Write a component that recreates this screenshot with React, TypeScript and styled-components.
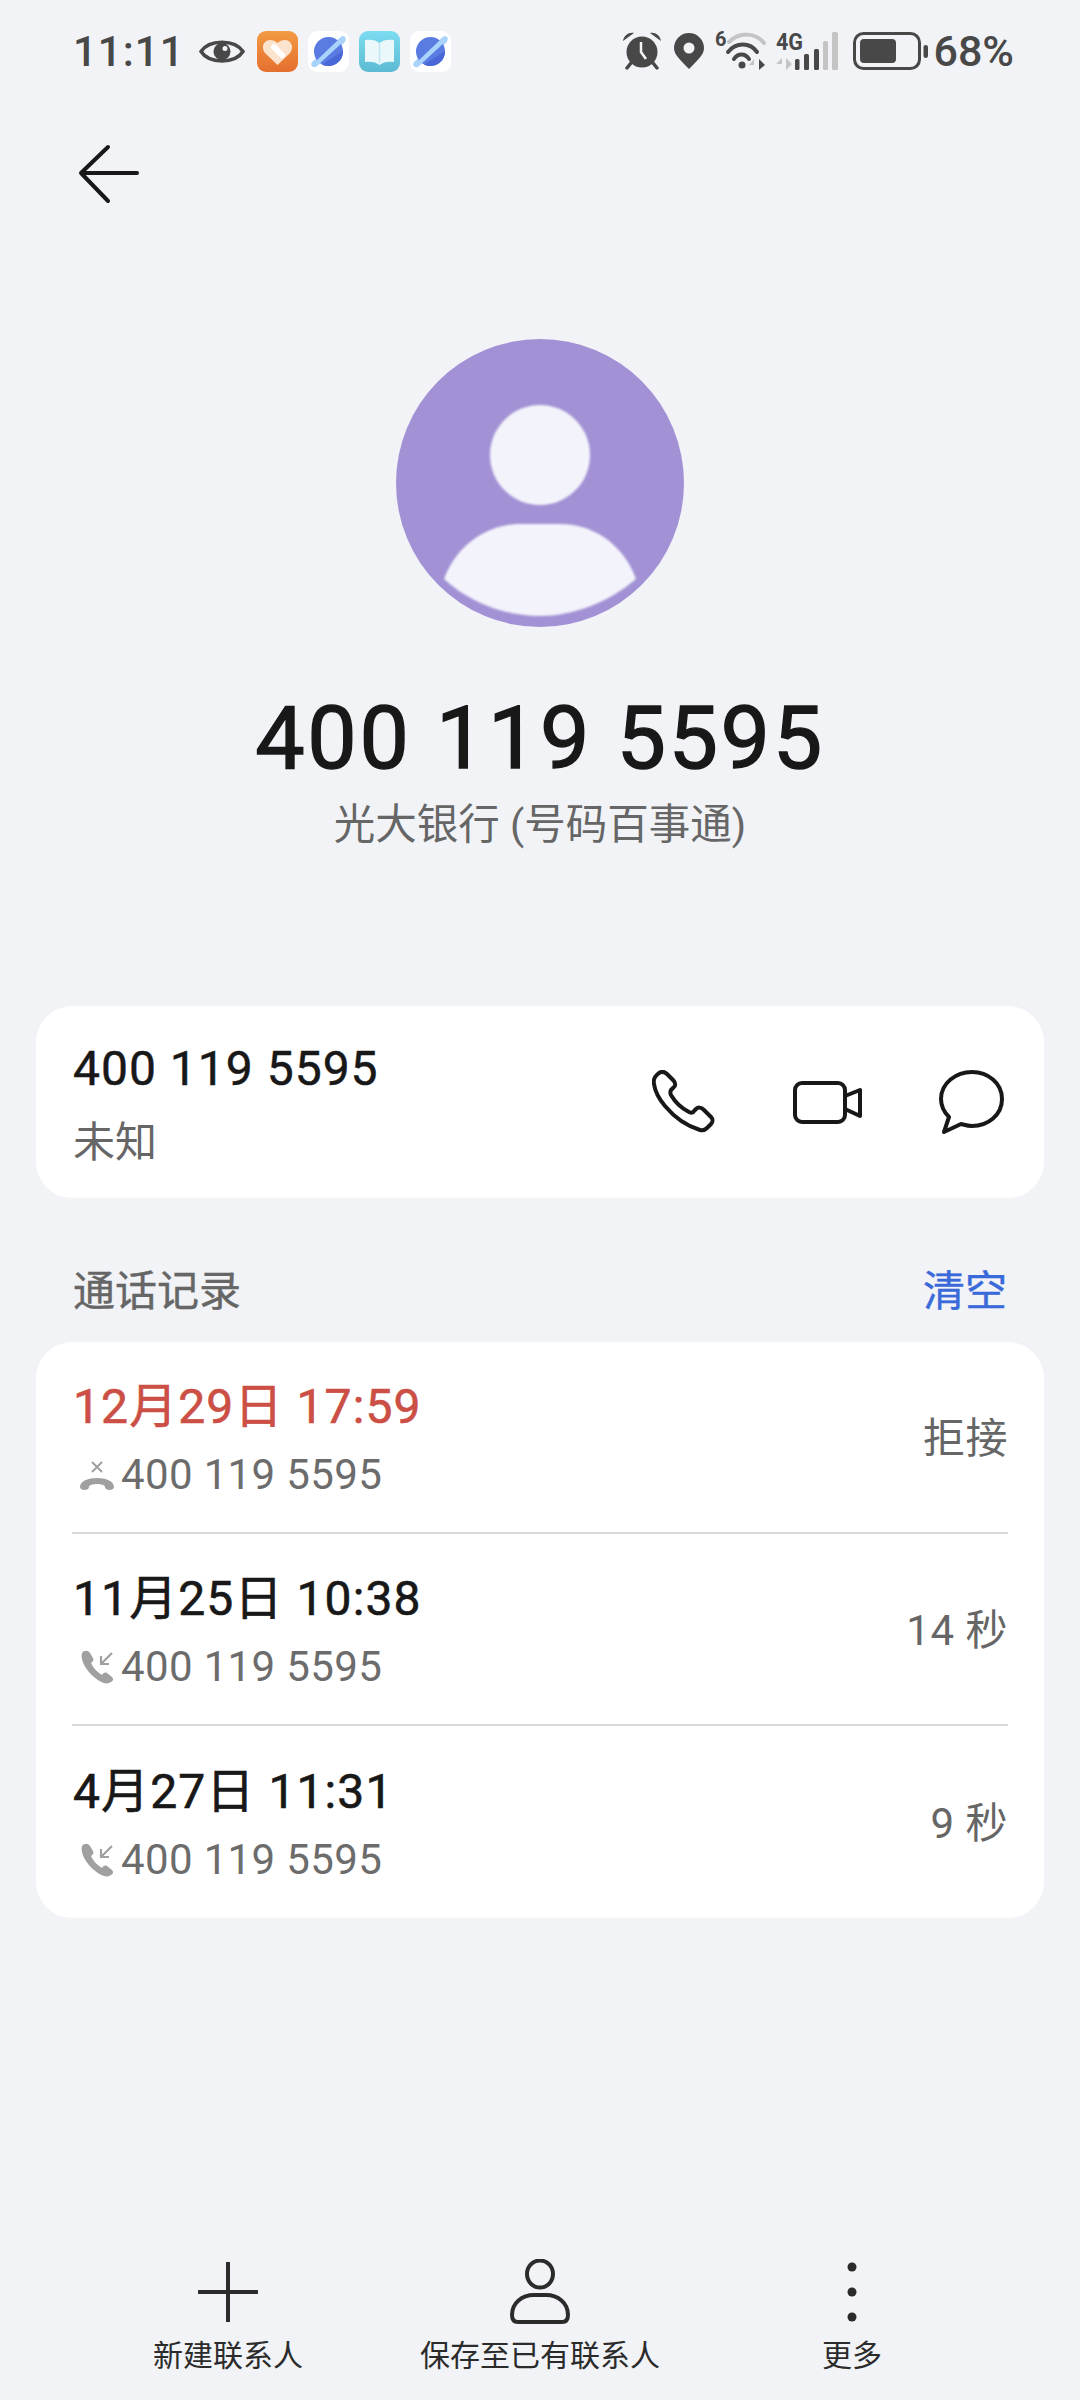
import * as React from 'react';
import styled, { createGlobalStyle } from 'styled-components';

const FONT = `Roboto, "Noto Sans CJK SC", sans-serif`;
const INK = '#181818';
const GREY = '#666666';
const STATUS = '#484848';
const PAGE_BG = '#f1f3f7';

const GlobalStyle = createGlobalStyle`
  html, body {
    margin: 0;
    padding: 0;
    background: ${PAGE_BG};
    font-family: ${FONT};
  }
`;

const Page = styled.div`
  width: 1080px;
  height: 2400px;
  background: ${PAGE_BG};
  display: flex;
  flex-direction: column;
  overflow: hidden;
`;

const StatusBar = styled.div`
  height: 42px;
  margin-top: 30px;
  padding: 0 66px 0 73px;
  display: flex;
  align-items: center;
  justify-content: space-between;
  color: ${STATUS};
`;

const StatusGroup = styled.div`
  display: flex;
  align-items: center;
`;

const Clock = styled.span`
  width: 126px;
  font-size: 42px;
  font-weight: 500;
  letter-spacing: 1px;
`;

const AppIcons = styled.div`
  display: flex;
  gap: 10px;
  margin-left: 12px;
`;

const AppIcon = styled.svg`
  width: 41px;
  height: 41px;
  display: block;
`;

const StatusIcon = styled.svg<{ $gap?: number }>`
  display: block;
  margin-left: ${(p) => p.$gap ?? 0}px;
`;

const Battery = styled.span`
  font-size: 43px;
  font-weight: 500;
  margin-left: 5px;
`;

const BackRow = styled.div`
  height: 60px;
  margin-top: 72px;
  padding-left: 78px;
`;

const Hero = styled.div`
  margin-top: 135px;
  display: flex;
  flex-direction: column;
  align-items: center;
`;

const Avatar = styled.svg`
  width: 288px;
  height: 288px;
  display: block;
`;

const AvatarFigure = styled.g`
  filter: blur(0.8px);
`;

const Number = styled.div`
  margin-top: 55px;
  font-size: 88px;
  line-height: 112px;
  font-weight: 400;
  letter-spacing: 2.6px;
  -webkit-text-stroke: 1.4px ${INK};
  color: ${INK};
`;

const Subtitle = styled.div`
  margin-top: 5px;
  font-size: 41.5px;
  line-height: 52px;
  color: ${GREY};
`;

const Card = styled.div`
  margin: 0 36px;
  background: #fff;
  border-radius: 36px;
`;

const NumberCard = styled(Card)`
  margin-top: 155px;
  height: 192px;
  padding: 0 40px 0 37px;
  display: flex;
  align-items: center;
  justify-content: space-between;
`;

const NumberBlock = styled.div`
  padding-top: 4px;
`;

const NumberText = styled.div`
  font-size: 48px;
  line-height: 60px;
  font-weight: 400;
  letter-spacing: 1px;
  -webkit-text-stroke: 0.5px ${INK};
  color: ${INK};
`;

const Caption = styled.div`
  margin-top: 18px;
  font-size: 42px;
  line-height: 52px;
  color: ${GREY};
`;

const Actions = styled.div`
  display: flex;
  align-items: center;
  gap: 77px;
`;

const SectionHead = styled.div`
  height: 144px;
  padding: 34px 73px 0 73px;
  box-sizing: border-box;
  display: flex;
  justify-content: space-between;
  align-items: center;
  font-size: 42px;
  color: ${GREY};
`;

const SectionTitle = styled.span`
  -webkit-text-stroke: 0.4px ${GREY};
`;

const ClearLink = styled.span`
  color: #3a6ad9;
  -webkit-text-stroke: 0.4px #3a6ad9;
`;

const LogCard = styled(Card)`
  padding: 0 36px;
`;

const LogRow = styled.div<{ $last?: boolean }>`
  height: 192px;
  box-sizing: border-box;
  display: flex;
  align-items: center;
  justify-content: space-between;
  border-bottom: ${(p) => (p.$last ? 'none' : '2px solid #dadada')};
`;

const LogText = styled.div`
  padding-top: 5px;
`;

const LogWhen = styled.div<{ $missed?: boolean }>`
  padding-left: 1px;
  font-size: 48px;
  line-height: 60px;
  font-weight: 400;
  letter-spacing: 1.1px;
  -webkit-text-stroke: 0.6px ${(p) => (p.$missed ? '#cb4f45' : INK)};
  color: ${(p) => (p.$missed ? '#cb4f45' : INK)};
`;

const LogNumber = styled.div`
  margin-top: 10px;
  padding-left: 7px;
  display: flex;
  align-items: center;
  gap: 6px;
  font-size: 42px;
  line-height: 56px;
  color: #6c6c6c;
  letter-spacing: 0.35px;
`;

const LogIcon = styled.svg`
  width: 36px;
  height: 34px;
  display: block;
`;

const LogStatus = styled.div`
  margin-bottom: 5px;
  font-size: 42px;
  color: ${GREY};
  letter-spacing: 0.5px;
`;

const BottomBar = styled.div`
  margin-top: auto;
  margin-bottom: 24px;
  padding: 0 72px;
  display: grid;
  grid-template-columns: repeat(3, 312px);
`;

const BottomItem = styled.div`
  display: flex;
  flex-direction: column;
  align-items: center;
  white-space: nowrap;
`;

const BottomIconSlot = styled.div`
  height: 66px;
  display: flex;
  align-items: center;
  justify-content: center;
`;

const BottomLabel = styled.div`
  margin-top: 11px;
  font-size: 30px;
  line-height: 40px;
  color: #2b2b2b;
`;

const PlanetIcon = () => (
  <AppIcon viewBox="0 0 41 41">
    <rect width="41" height="41" rx="9" fill="#fff" />
    <path d="M4 31 C2 34 4 37 8 36 L36 12 C39 8 38 5 34 5 Z" fill="#a9d3fb" />
    <circle cx="20.5" cy="20.5" r="14.5" fill="#5a7be2" />
    <path d="M7 31 L30 9 L35 11 L10 34 Z" fill="#a9d3fb" />
    <path d="M35 20 A14.5 14.5 0 0 1 14 33.5 Z" fill="#4a67d8" />
  </AppIcon>
);

const IncomingIcon = () => (
  <LogIcon viewBox="0 0 36 34">
    <path d="M3 3 C5 0 9 0 11 3 L14 8 C15 10 14 12 12 13 C14 18 18 22 23 25 C24 23 26 22 28 23 L33 27 C35 29 34 31 32 32 C28 35 22 33 15 27 C7 20 1 10 3 3 Z" fill="#a0a0a0" />
    <path d="M33 3 L22 14 M22 6 V14 H30" fill="none" stroke="#a0a0a0" strokeWidth="2.2" />
  </LogIcon>
);

const App = () => (
  <Page>
    <GlobalStyle />
    <StatusBar>
      <StatusGroup>
        <Clock>11:11</Clock>
        <StatusIcon width="46" height="31" viewBox="0 0 46 31">
          <path d="M2 15.5 C10 3 36 3 44 15.5 C36 28 10 28 2 15.5 Z" fill="none" stroke={STATUS} strokeWidth="3.5" />
          <circle cx="23" cy="15.5" r="8.5" fill={STATUS} />
          <circle cx="26" cy="12.5" r="2.5" fill={PAGE_BG} />
        </StatusIcon>
        <AppIcons>
          <AppIcon viewBox="0 0 41 41">
            <defs>
              <linearGradient id="healthBg" x1="0" y1="0" x2="0" y2="1">
                <stop offset="0" stopColor="#f29b45" />
                <stop offset="1" stopColor="#e56f2e" />
              </linearGradient>
            </defs>
            <rect width="41" height="41" rx="9" fill="url(#healthBg)" />
            <path d="M20.5 34 L8 22 C3 15 8 9 13 9 C16 9 18.5 10 20.5 12 C22.5 10 25 9 28 9 C33 9 38 15 33 22 Z" fill="#fbe3cd" />
            <path d="M17 16 L25 24" stroke="#fff" strokeWidth="6" strokeLinecap="round" />
          </AppIcon>
          <PlanetIcon />
          <AppIcon viewBox="0 0 41 41">
            <defs>
              <linearGradient id="bookBg" x1="0" y1="0" x2="0" y2="1">
                <stop offset="0" stopColor="#7cdcf1" />
                <stop offset="1" stopColor="#5cbbd2" />
              </linearGradient>
            </defs>
            <rect width="41" height="41" rx="9" fill="url(#bookBg)" />
            <path d="M6 9 C12 8 17 9 20.5 12 C24 9 29 8 35 9 L35 31 C29 30 24 31 20.5 34 C17 31 12 30 6 31 Z" fill="#eaf8fc" />
            <path d="M20.5 12 V32" stroke="#bfe6f0" strokeWidth="1.5" />
          </AppIcon>
          <PlanetIcon />
        </AppIcons>
      </StatusGroup>
      <StatusGroup>
        <StatusIcon width="38" height="38" viewBox="0 0 38 38">
          <circle cx="19" cy="20" r="15.5" fill={STATUS} />
          <path d="M18 10 V20 L23 27" fill="none" stroke={PAGE_BG} strokeWidth="2.5" />
          <path d="M0 9 C1 3 6 0 11 1 Z M38 9 C37 3 32 0 27 1 Z" fill={STATUS} />
          <path d="M8 31 L4 36 M30 31 L34 36" stroke={STATUS} strokeWidth="3.5" strokeLinecap="round" />
        </StatusIcon>
        <StatusIcon $gap={13} width="30" height="36" viewBox="0 0 30 36">
          <path d="M15 36 C5 26 0 21 0 15 A15 15 0 0 1 30 15 C30 21 25 26 15 36 Z" fill={STATUS} />
          <circle cx="15" cy="15" r="5.5" fill={PAGE_BG} />
        </StatusIcon>
        <StatusIcon $gap={8} width="54" height="52" viewBox="0 -6 54 52">
          <text x="3" y="15" fontSize="20" fontWeight="700" fill={STATUS} fontFamily="Roboto">6</text>
          <path d="M17 11 C27 1 43 1 52 12" fill="none" stroke="#c4c4c4" strokeWidth="4" strokeLinecap="round" />
          <path d="M16 21 C24 11 38 11 45 21" fill="none" stroke={STATUS} strokeWidth="4" strokeLinecap="round" />
          <path d="M22 28 C26 22 33 22 37 28" fill="none" stroke={STATUS} strokeWidth="4" strokeLinecap="round" />
          <circle cx="30" cy="34" r="3.5" fill={STATUS} />
          <path d="M42 28 L37 34 H42 V39 Z" fill="#c4c4c4" />
          <path d="M47 28 L53 34 L47 39 Z" fill={STATUS} />
        </StatusIcon>
        <StatusIcon $gap={10} width="62" height="52" viewBox="0 -6 62 52">
          <text x="0" y="19" fontSize="23" fontWeight="700" fill={STATUS} fontFamily="Roboto" textLength="27" lengthAdjust="spacingAndGlyphs">4G</text>
          <path d="M6 27 L0 33 H6 V39 Z M10 27 L16 33 L10 39 Z" fill="#c4c4c4" />
          <rect x="19" y="28" width="4.5" height="11" rx="1.5" fill={STATUS} />
          <rect x="28" y="23" width="5" height="16" rx="1.5" fill={STATUS} />
          <rect x="38" y="18" width="5" height="21" rx="1.5" fill={STATUS} />
          <rect x="47" y="10" width="5" height="29" rx="1.5" fill="#c4c4c4" />
          <rect x="56" y="1" width="6" height="38" rx="1.5" fill="#c4c4c4" />
        </StatusIcon>
        <StatusIcon $gap={15} width="75" height="38" viewBox="0 0 75 38">
          <rect x="1.5" y="1.5" width="65" height="35" rx="9" fill="none" stroke={STATUS} strokeWidth="3" />
          <rect x="7" y="7" width="36" height="24" rx="4" fill={STATUS} />
          <rect x="70.5" y="13" width="4.5" height="13" rx="2.2" fill={STATUS} />
        </StatusIcon>
        <Battery>68%</Battery>
      </StatusGroup>
    </StatusBar>

    <BackRow>
      <svg width="62" height="60" viewBox="0 0 62 60">
        <path d="M30 3 L3 29 L30 57 M3 29 H59" fill="none" stroke={INK} strokeWidth="4" strokeLinecap="round" strokeLinejoin="round" />
      </svg>
    </BackRow>

    <Hero>
      <Avatar viewBox="0 0 288 288">
        <circle cx="144" cy="144" r="144" fill="#a292d5" />
        <AvatarFigure>
          <circle cx="144" cy="116" r="50" fill="#f3f3fb" />
          <path d="M48 240 C62 202 96 185 124 185 H164 C194 185 226 202 240 240 C212 264 176 277 144 277 C110 277 74 264 48 240 Z" fill="#f3f3fb" />
        </AvatarFigure>
      </Avatar>
      <Number>400 119 5595</Number>
      <Subtitle>光大银行 (号码百事通)</Subtitle>
    </Hero>

    <NumberCard>
      <NumberBlock>
        <NumberText>400 119 5595</NumberText>
        <Caption>未知</Caption>
      </NumberBlock>
      <Actions>
        <svg width="64" height="64" viewBox="0 0 64 64">
          <path d="M7 3 C10 1 13 2 15 4 L21 10 C24 13 24 16 21 18 L19 20 C18 22 18 23 19 25 C23 32 29 38 37 42 C39 43 41 43 42 41 L44 39 C46 37 49 37 52 40 L59 47 C61 49 61 52 59 54 L55 58 C53 60 51 61 48 60 C35 56 23 48 13 36 C7 29 3 21 2 14 C1 10 3 6 7 3 Z" fill="none" stroke={INK} strokeWidth="4" strokeLinejoin="round" />
        </svg>
        <svg width="69" height="43" viewBox="0 0 69 43">
          <rect x="2" y="2" width="50" height="39" rx="7" fill="none" stroke={INK} strokeWidth="4" />
          <path d="M52 15 L67 9 V35 L52 28" fill="none" stroke={INK} strokeWidth="4" strokeLinejoin="round" />
        </svg>
        <svg width="65" height="64" viewBox="0 0 65 64">
          <path d="M33 2 C49 2 63 13 63 29 C63 45 49 56 33 56 C29 56 26 55 22 54 L5 62 L10 47 C5 42 2 36 2 29 C2 13 17 2 33 2 Z" fill="none" stroke={INK} strokeWidth="4" strokeLinejoin="round" />
        </svg>
      </Actions>
    </NumberCard>

    <SectionHead>
      <SectionTitle>通话记录</SectionTitle>
      <ClearLink>清空</ClearLink>
    </SectionHead>

    <LogCard>
      <LogRow>
        <LogText>
          <LogWhen $missed>12月29日 17:59</LogWhen>
          <LogNumber>
            <LogIcon viewBox="0 0 36 34">
              <path d="M13 4 L23 14 M23 4 L13 14" stroke="#a0a0a0" strokeWidth="2" />
              <path d="M1 29 C1 17 35 17 35 29 C35 33 26 33 26 29 C26 25 10 25 10 29 C10 33 1 33 1 29 Z" fill="#a0a0a0" />
            </LogIcon>
            400 119 5595
          </LogNumber>
        </LogText>
        <LogStatus>拒接</LogStatus>
      </LogRow>
      <LogRow>
        <LogText>
          <LogWhen>11月25日 10:38</LogWhen>
          <LogNumber>
            <IncomingIcon />
            400 119 5595
          </LogNumber>
        </LogText>
        <LogStatus>14 秒</LogStatus>
      </LogRow>
      <LogRow $last>
        <LogText>
          <LogWhen>4月27日 11:31</LogWhen>
          <LogNumber>
            <IncomingIcon />
            400 119 5595
          </LogNumber>
        </LogText>
        <LogStatus>9 秒</LogStatus>
      </LogRow>
    </LogCard>

    <BottomBar>
      <BottomItem>
        <BottomIconSlot>
          <svg width="60" height="60" viewBox="0 0 60 60">
            <path d="M30 1 V59 M1 30 H59" stroke="#2b2b2b" strokeWidth="4" strokeLinecap="round" />
          </svg>
        </BottomIconSlot>
        <BottomLabel>新建联系人</BottomLabel>
      </BottomItem>
      <BottomItem>
        <BottomIconSlot>
          <svg width="60" height="66" viewBox="0 0 60 66">
            <ellipse cx="30" cy="15" rx="13" ry="13.5" fill="none" stroke="#2b2b2b" strokeWidth="4" />
            <path d="M2 56 C2 44 12 36 24 36 H36 C48 36 58 44 58 56 C58 61 56 63 52 63 H8 C4 63 2 61 2 56 Z" fill="none" stroke="#2b2b2b" strokeWidth="4" />
          </svg>
        </BottomIconSlot>
        <BottomLabel>保存至已有联系人</BottomLabel>
      </BottomItem>
      <BottomItem>
        <BottomIconSlot>
          <svg width="12" height="60" viewBox="0 0 12 60">
            <ellipse cx="6" cy="5" rx="4.5" ry="4.5" fill="#2b2b2b" />
            <ellipse cx="6" cy="30" rx="4.5" ry="4.5" fill="#2b2b2b" />
            <ellipse cx="6" cy="55" rx="4.5" ry="4.5" fill="#2b2b2b" />
          </svg>
        </BottomIconSlot>
        <BottomLabel>更多</BottomLabel>
      </BottomItem>
    </BottomBar>
  </Page>
);

export default App;
